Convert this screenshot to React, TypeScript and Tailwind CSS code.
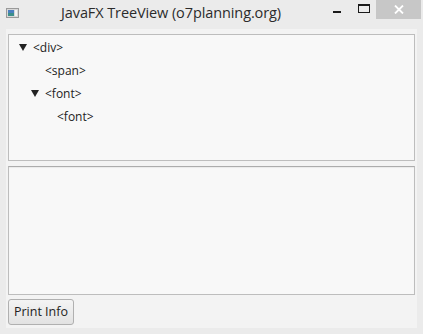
import React from "react";

function Arrow() {
  return (
    <svg width="8" height="7" viewBox="0 0 8 7" className="shrink-0">
      <polygon points="0,0 8,0 4,7" fill="#222" />
    </svg>
  );
}

function Row({ level, expanded, label }: { level: number; expanded?: boolean; label: string }) {
  return (
    <div className="flex h-[23px] items-center" style={{ paddingLeft: 10 + level * 12 }}>
      <div className="flex w-[14px] items-center">{expanded ? <Arrow /> : null}</div>
      <span className="text-[12px] text-[#222]">{label}</span>
    </div>
  );
}

export default function App() {
  return (
    <div
      className="relative h-[334px] w-[423px] overflow-hidden bg-[#ebebeb]"
      style={{ fontFamily: '"Open Sans", "Noto Sans", sans-serif' }}
    >
      {/* Title bar */}
      <div className="relative flex h-[29px] items-start">
        <div className="ml-[6px] mt-[8px]">
          <svg width="13" height="10" viewBox="0 0 13 10">
            <rect x="0.5" y="0.5" width="12" height="9" fill="#d8d8d8" stroke="#9a9a9a" />
            <rect x="2" y="2" width="6" height="6" fill="#3c8f8a" />
            <rect x="2" y="2" width="6" height="3" fill="#4a7fc0" />
            <rect x="9" y="2" width="2" height="6" fill="#f4f4f4" />
          </svg>
        </div>
        <div className="ml-[42px] mt-[3px] text-[14.5px] leading-[20px] tracking-[-0.1px] text-[#2b2b2b]">
          JavaFX TreeView (o7planning.org)
        </div>
        <div className="absolute left-[333px] top-[11px] h-[2px] w-[8px] bg-[#1a1a1a]" />
        <div className="absolute left-[358px] top-[4px] h-[9px] w-[12px] border border-t-2 border-[#1a1a1a]" />
        <div className="absolute left-[376px] top-0 flex h-[19px] w-[45px] items-center justify-center bg-[#c7c7c7]">
          <svg width="10" height="9" viewBox="0 0 10 9">
            <path d="M1 0.5 L9 8.5 M9 0.5 L1 8.5" stroke="#fff" strokeWidth="1.8" />
          </svg>
        </div>
      </div>

      {/* Client area */}
      <div className="ml-[6px] flex h-[299px] w-[411px] flex-col bg-[#f3f3f3] pl-[2px] pr-[2px] pt-[5px]">
        <div className="h-[127px] w-[407px] shrink-0 border border-[#bdbdbd] bg-[#f8f8f8] pt-[1px]">
          <Row level={0} expanded label="<div>" />
          <Row level={1} label="<span>" />
          <Row level={1} expanded label="<font>" />
          <Row level={2} label="<font>" />
        </div>
        <div className="mt-[5px] h-[129px] w-[407px] shrink-0 border border-[#bdbdbd] border-t-[#acacac] bg-[#f8f8f8] shadow-[inset_0_1px_1px_rgba(0,0,0,0.06)]" />
        <div className="mt-[4px] flex">
          <button className="h-[26px] w-[66px] rounded-[3px] border border-[#b0b0b0] bg-gradient-to-b from-[#f4f4f4] to-[#e2e2e2] text-[12.5px] text-[#222]">
            Print Info
          </button>
        </div>
      </div>
    </div>
  );
}
